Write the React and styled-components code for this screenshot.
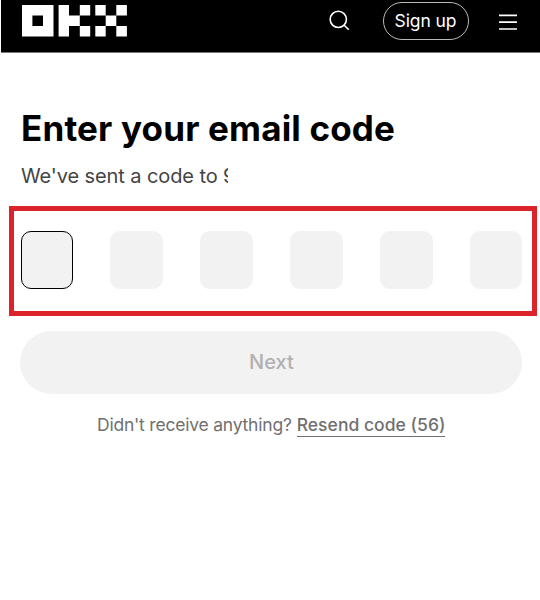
import React from 'react';
import styled, { createGlobalStyle } from 'styled-components';

const GlobalStyle = createGlobalStyle`
  * { box-sizing: border-box; }
  body {
    margin: 0;
    background: #fff;
    font-family: Inter, "Liberation Sans", sans-serif;
    overflow: hidden;
  }
`;

const Page = styled.div`
  width: 540px;
  height: 600px;
  overflow: hidden;
`;

const Header = styled.header`
  height: 53px;
  margin-left: 1px;
  padding: 0 23px 0 21px;
  display: flex;
  align-items: flex-start;
  background: #000;
  border-bottom: 1px solid #777;
`;

const Logo = styled.svg`
  display: block;
  margin-top: 5px;
`;

const Actions = styled.div`
  display: flex;
  align-items: flex-start;
  margin-left: auto;
`;

const SearchIcon = styled.svg`
  margin: 9px 32px 0 0;
`;

const MenuIcon = styled.svg`
  margin: 12px 0 0 30px;
`;

const SignUp = styled.button`
  width: 86px;
  height: 38px;
  margin-top: 2px;
  padding: 0 1px 0 0;
  border: 1px solid #bbb;
  border-radius: 19px;
  background: transparent;
  color: #fff;
  font: 400 17.5px/34px Inter, sans-serif;
  letter-spacing: -0.1px;
`;

const Main = styled.main`
  padding: 52px 3px 0 9px;
`;

const Title = styled.h1`
  margin: 0 0 0 12px;
  font-size: 35px;
  line-height: 46px;
  font-weight: 700;
  letter-spacing: 0.17px;
  color: #000;
  white-space: nowrap;
`;

const Subtitle = styled.p`
  width: 207px;
  margin: 10px 0 0 12px;
  overflow: hidden;
  white-space: nowrap;
  font-size: 20px;
  line-height: 30px;
  letter-spacing: -0.1px;
  color: #444;
`;

const CodeFrame = styled.section`
  height: 110px;
  margin-top: 15px;
  padding: 20px 9.5px 0 6.5px;
  display: flex;
  justify-content: space-between;
  border: 5px solid #db232c;
`;

const Digit = styled.div`
  width: 52.5px;
  height: 58px;
  border-radius: 10px;
  border: 1px solid ${({ $active }) => ($active ? '#000' : '#f2f2f2')};
  background: #f2f2f2;
`;

const NextButton = styled.button`
  display: block;
  width: 502px;
  height: 63px;
  margin: 15px 0 0 11.4px;
  padding: 0 0 2px;
  border: 0;
  border-radius: 32px;
  background: #f2f2f2;
  color: #b0b0b0;
  font: 500 20px/30px Inter, sans-serif;
`;

const Resend = styled.p`
  margin: 19px 0 0 88px;
  display: flex;
  align-items: flex-start;
  gap: 5px;
  font-size: 17.5px;
  line-height: 24px;
  color: #707070;
  white-space: nowrap;
`;

const Prompt = styled.span`
  letter-spacing: -0.21px;
`;

const ResendLink = styled.a`
  height: 24px;
  border-bottom: 1px solid #707070;
  font-weight: 500;
  letter-spacing: 0.03px;
`;

export default function App() {
  return (
    <Page>
      <GlobalStyle />
      <Header>
        <Logo width="106" height="32" viewBox="0 0 106 32" fill="#fff" aria-label="OKX">
          <path fillRule="evenodd" d="M0 0h31.5v31.5H0zM10.4 10.5v10.5H21V10.5z" />
          <path d="M36.6 0H47v10.5h10.8V21H47v10.5H36.6zM57.8 0h10.4v10.5H57.8zM57.8 21h10.4v10.5H57.8z" />
          <path d="M73.3 0h10.4v10.5H73.3zM94.3 0h10.6v10.5H94.3zM83.7 10.5h10.6V21H83.7zM73.3 21h10.4v10.5H73.3zM94.3 21h10.6v10.5H94.3z" />
        </Logo>
        <Actions>
          <SearchIcon width="22" height="24" viewBox="0 0 22 24" fill="none" stroke="#fff" strokeWidth="1.6">
            <circle cx="9.3" cy="10.4" r="8.1" />
            <path d="M15.2 16.3l4.6 4.5" />
          </SearchIcon>
          <SignUp>Sign up</SignUp>
          <MenuIcon width="18" height="20" viewBox="0 0 18 20" stroke="#fff" strokeWidth="1.7">
            <path d="M0 3.3h18M0 10.2h18M0 17h18" />
          </MenuIcon>
        </Actions>
      </Header>
      <Main>
        <Title>Enter your email code</Title>
        <Subtitle>We've sent a code to 9</Subtitle>
        <CodeFrame>
          {[0, 1, 2, 3, 4, 5].map((i) => (
            <Digit key={i} $active={i === 0} />
          ))}
        </CodeFrame>
        <NextButton>Next</NextButton>
        <Resend>
          <Prompt>Didn't receive anything?</Prompt>
          <ResendLink>Resend code (56)</ResendLink>
        </Resend>
      </Main>
    </Page>
  );
}
